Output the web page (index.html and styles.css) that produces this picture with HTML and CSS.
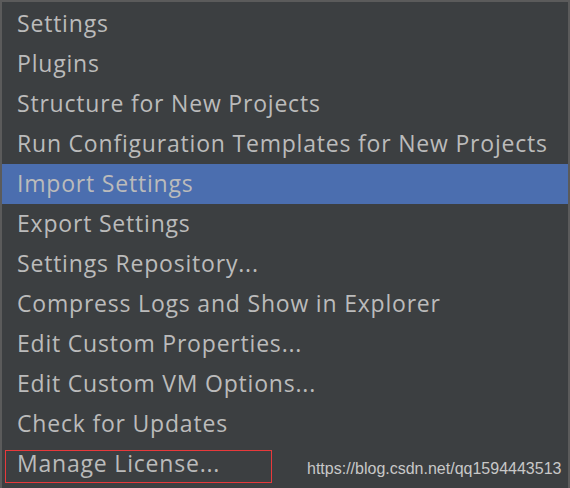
FILE: index.html
```html
<!DOCTYPE html>
<html>
<head>
<meta charset="utf-8">
<link rel="stylesheet" href="styles.css">
</head>
<body>
<div class="menu">
  <div class="item">Settings</div>
  <div class="item">Plugins</div>
  <div class="item">Structure for New Projects</div>
  <div class="item">Run Configuration Templates for New Projects</div>
  <div class="item active">Import Settings</div>
  <div class="item">Export Settings</div>
  <div class="item">Settings Repository...</div>
  <div class="item">Compress Logs and Show in Explorer</div>
  <div class="item">Edit Custom Properties...</div>
  <div class="item">Edit Custom VM Options...</div>
  <div class="item">Check for Updates</div>
  <div class="item">Manage License...</div>
  <div class="mark"></div>
  <div class="watermark">https://blog.csdn.net/qq1594443513</div>
</div>
</body>
</html>
```
FILE: styles.css
```css
html, body {
  margin: 0;
  padding: 0;
  background: #e8e8e8;
}
.menu {
  position: relative;
  width: 566px;
  height: 482px;
  padding: 2px 0 2px 0;
  background: #3c3f41;
  border: 2px solid #5b5b5b;
  border-bottom: none;
  font-family: "Open Sans", "Noto Sans", sans-serif;
  font-size: 23px;
  color: #bbbbbb;
}
.item {
  height: 40px;
  line-height: 38px;
  padding-left: 15px;
  white-space: nowrap;
  letter-spacing: 0.8px;
}
.item.active {
  background: #4b6eaf;
}
.mark {
  position: absolute;
  left: 3px;
  top: 448px;
  width: 265px;
  height: 31px;
  border: 1px solid #e8393b;
}
.watermark {
  position: absolute;
  left: 305px;
  top: 458px;
  font-family: "Liberation Sans", Arial, sans-serif;
  font-size: 16px;
  letter-spacing: 0;
  color: #c8c8c8;
}
```
